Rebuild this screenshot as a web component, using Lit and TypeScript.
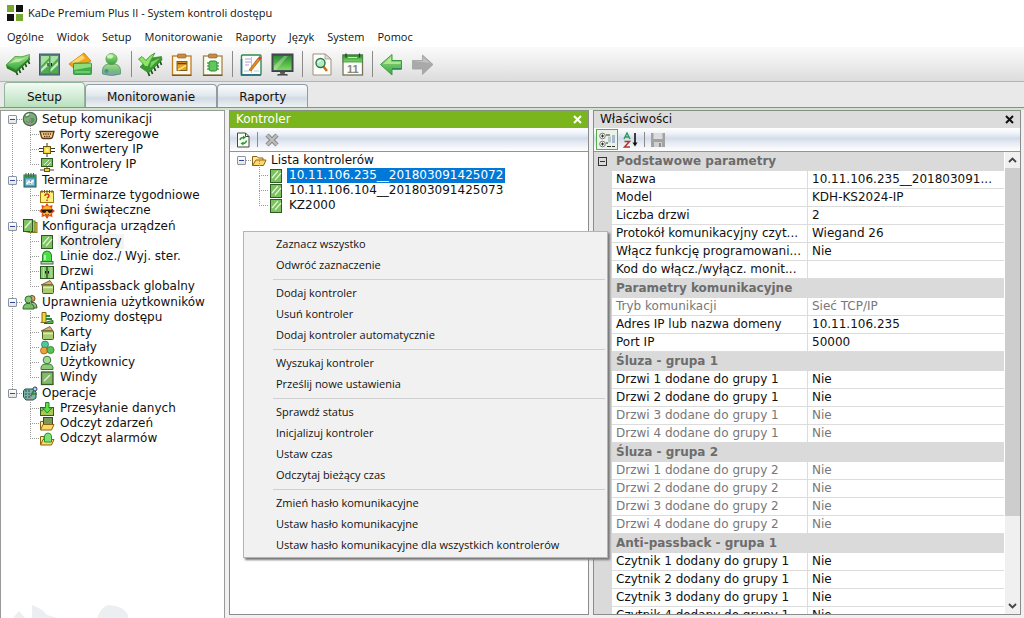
import { LitElement, html, css, svg, nothing, TemplateResult, SVGTemplateResult } from 'lit';
import { customElement, property, state } from 'lit/decorators.js';
import { classMap } from 'lit/directives/class-map.js';

/* ---------- icon artwork ---------- */

const BIG: Record<string, SVGTemplateResult> = {
  chip: svg`<path d="M11 20l1.500 4M14 18l1.500 4M17 15l1.500 4M20 12l1.500 4M23 9l1.500 4" stroke="#1d4a1d" stroke-width="1.700"/>
    <path d="M1 14L2 17.500L11 22L25 9L24.500 5z" fill="#2a7a26"/>
    <path d="M1 14L10 5.500Q17 7 24.500 3.500L23.500 8L11 19z" fill="url(#gr)" stroke="#3b9a30" stroke-width=".8"/>
    <path d="M4 13L11 7.500Q16 8.500 21 6.500L14 11Q9 10.500 4 13z" fill="#c9efb4" opacity=".8"/>`,
  doors: svg`<rect x="3.500" y="3" width="20" height="21" fill="#5d7f7c" stroke="#35606a"/>
    <rect x="5" y="5" width="8" height="17" fill="#4fae4c"/><rect x="14.500" y="5" width="7.500" height="17" fill="#4fae4c"/>
    <path d="M5 5h8v2L5 15zM14.500 5h7.500v2l-7.500 8z" fill="#a9dfa0"/>
    <path d="M5 18L13 10V14L5 21zM14.500 18L22 10.500V14L14.500 21z" fill="#d9f5d4" opacity=".85"/>
    <path d="M12 12v3M15.500 12v3" stroke="#123" stroke-width="1.200"/>`,
  cards: svg`<path d="M2 13L17 2L24 10L8 18z" fill="#f2a71b" stroke="#c27a08" stroke-width=".8"/>
    <path d="M5 11L15 4L18 7L7 14z" fill="#ffd56a"/>
    <rect x="6.500" y="12" width="18" height="11.500" rx="1" fill="#3fae48" stroke="#2c8a38" stroke-width=".8"/>
    <path d="M7 13L24 12.500V16L7 19z" fill="#8fdc7c"/><path d="M8 21h15" stroke="#9fe0a0" stroke-width="1"/>`,
  user: svg`<path d="M4.500 23Q3.500 14 10 13H17Q23.500 14 22.500 23Q14 26 4.500 23z" fill="url(#us)" stroke="#4d8a5c" stroke-width=".7"/>
    <circle cx="13.500" cy="8" r="5.600" fill="url(#gr)" stroke="#4b9a48" stroke-width=".7"/>
    <ellipse cx="12" cy="5.500" rx="3" ry="2" fill="#d8f5c8" opacity=".9"/><circle cx="8.500" cy="20" r="2" fill="#3b66b8" opacity=".6"/>`,
  chipCheck: svg`<path d="M11 21l1.500 4M14 19l1.500 4M17 16l1.500 4M20 13l1.500 4M23 10l1.500 4" stroke="#1d4a1d" stroke-width="1.700"/>
    <path d="M3 16L11 7.500L24.500 5.500L25 9L11.500 22z" fill="#3a9a30" stroke="#2a7a26" stroke-width=".6"/>
    <path d="M14 11L23 7L13 17z" fill="#7fcf6c"/>
    <path d="M1.500 8L5 5.500L9 9.500Q13 4 18 2Q14 8 11 15.500H8Q5 11 1.500 8z" fill="#8ee36a" stroke="#3aa02c" stroke-width=".9"/>`,
  clipCard: svg`<rect x="4.500" y="5" width="18.500" height="19" fill="#fff8ea" stroke="#c07a20" stroke-width="1.300"/>
    <path d="M4 24.300h19.500" stroke="#333" stroke-width=".8"/>
    <rect x="9.500" y="3" width="8.500" height="4" rx="1" fill="#c98a45" stroke="#805a2a" stroke-width=".6"/>
    <rect x="9" y="10.500" width="10" height="9" fill="#f3a112" stroke="#5a4a18" stroke-width=".8"/><path d="M9.500 12.500h9" stroke="#444" stroke-width="1.500"/>
    <path d="M10 19L18 14.500" stroke="#ffe08a" stroke-width="1.500"/>`,
  clipChip: svg`<rect x="4.500" y="5" width="18.500" height="19" fill="#f8fff4" stroke="#a98345" stroke-width="1.300"/>
    <path d="M4 24.300h19.500" stroke="#333" stroke-width=".8"/>
    <rect x="9.500" y="3" width="8.500" height="4" rx="1" fill="#c98a45" stroke="#805a2a" stroke-width=".6"/>
    <path d="M8 12h12M8 15h12M8 18h12" stroke="#2c6e32" stroke-width="1.200"/>
    <rect x="10" y="10" width="8" height="10" rx="2" fill="#5fc858" stroke="#2f8a3a"/>`,
  note: svg`<rect x="3.500" y="4" width="19.500" height="20" rx="1" fill="#fff" stroke="#2f8a4a" stroke-width="1.400"/>
    <path d="M3.500 8v16h19.500" stroke="#25688a" stroke-width="1.600"/><path d="M7 8h6M7 11h6M7 14h4" stroke="#cbbfe0" stroke-width="1.300"/>
    <path d="M13.500 6v16M16 20h5M6 20h5" stroke="#b8c8d8"/>
    <path d="M11 19L20 7L22 9L13 20z" fill="#e58b1c" stroke="#8a4a10" stroke-width=".6"/><path d="M20 7l2 2 1.500-2-2-2z" fill="#d33"/>`,
  monitor: svg`<rect x="3" y="3" width="21" height="17.500" fill="#4a5158" stroke="#3a4044"/>
    <rect x="4.500" y="5" width="18" height="14" fill="url(#gr2)"/><path d="M5 15L15 5h4L7 19H5z" fill="#fff" opacity=".3"/>
    <rect x="11" y="20.500" width="5" height="2" fill="#555"/><path d="M8.500 24Q13.500 21.500 18.500 24z" fill="#444" stroke="#444"/>`,
  search: svg`<path d="M5 3H17L23 8V24H5z" fill="#fffef8" stroke="#99917c"/><path d="M17 3V8H23z" fill="#ddd" stroke="#99917c" stroke-width=".7"/>
    <path d="M15 15L19 20" stroke="#d07018" stroke-width="2.600"/><circle cx="12.500" cy="12" r="4.500" fill="#b4ecc0" stroke="#267a52" stroke-width="1.400"/>
    <path d="M10 12q1-3 3-2.500" stroke="#fff" fill="none"/>`,
  calendar: svg`<rect x="4" y="4" width="19.500" height="20" fill="#fdfdfa" stroke="#77715c" stroke-width="1.300"/>
    <rect x="4" y="4" width="19.500" height="7" fill="url(#gr2)" stroke="#3a8a3c" stroke-width=".8"/><path d="M7 2.500v4M20.500 2.500v4" stroke="#333" stroke-width="1.300"/>
    <path d="M9 6.500h9" stroke="#b9efb0"/><text x="13.800" y="21.500" text-anchor="middle" font-family="Liberation Sans" font-weight="bold" font-size="11" fill="#8a8578">11</text>`,
  back: svg`<path d="M2.500 13.500L14 3.500V9.500H23.500V18H14V24z" fill="url(#gr)" stroke="#3a9a44" stroke-width="1"/>
    <path d="M5 13L13 6v5h9.500v2z" fill="#c6f7a4" opacity=".65"/><path d="M14 18h9.500" stroke="#1b6a6a"/>`,
  forward: svg`<path d="M24 13.500L13.500 4V9.500H3.500V18H13.500V23.500z" fill="#a9a9a9" stroke="#a0a0a0" stroke-width=".8"/><path d="M4 10h10v-4l7 6z" fill="#c2c2c2"/>`,
};

const dev = svg`<rect x="2.500" y="1.500" width="11" height="13" fill="#7cc262" stroke="#2c5a20"/><path d="M4 10L10 3M7 12L13 5" stroke="#dff5d0" stroke-width="1.200"/>`;
const cardsSmall = svg`<path d="M2 6L11 1.500L14 6z" fill="#d9b070" stroke="#6a4a20" stroke-width=".8"/><rect x="3.500" y="6" width="11" height="8.500" rx="1" fill="#a8cc70" stroke="#4a5a28"/><path d="M4 8.500h10" stroke="#ece4a8" stroke-width="1.500"/>`;
const person = svg`<path d="M2 14.500Q1.500 9.500 6 9H10Q14.500 9.500 14 14.500z" fill="#8cca78" stroke="#3a7a38"/><circle cx="8" cy="5" r="3.800" fill="#a4d894" stroke="#3a7a38"/>`;
const folder = svg`<path d="M1.500 13.500V4.500H6L7.500 6H12V8" fill="#ffe9a0" stroke="#8a6414"/><path d="M1.500 13.500L5 8H15L12.500 13.500z" fill="#ffd869" stroke="#8a6414"/>`;

const SMALL: Record<string, SVGTemplateResult> = {
  globe: svg`<circle cx="8" cy="8" r="6.700" fill="#7fae7a" stroke="#4f6a54" stroke-width="1.300"/><path d="M3 6q4 1 5-2M8 8q4-2 4 1-1 3-4 3zM4 10l3 2" fill="#5a9a58" stroke="#5a8a5c"/><path d="M4 4.500l3-1.500" stroke="#e6f5e0" stroke-width="1.500"/>`,
  port: svg`<path d="M1 4.500H15L13.500 10Q13 11.500 11.500 11.500H4.500Q3 11.500 2.500 10z" fill="#f3cf86" stroke="#5a3818" stroke-width="1.300"/><path d="M4 7h8M5 9.500h6" stroke="#5a3010" stroke-width="1.300" stroke-dasharray="1.300 1"/>`,
  converter: svg`<path d="M0 6.500h16M0 9.500h16M8 1v14" stroke="#333"/><rect x="4.500" y="4.500" width="7" height="7" fill="#f8d830" stroke="#6a5a10"/><rect x="6.500" y="6.500" width="3" height="3" fill="#fff5a0"/>`,
  ipctl: svg`<rect x="2.500" y="1.500" width="11" height="8" fill="#7cc262" stroke="#2c5a20"/><path d="M5 8l5-5M8 9l4-4" stroke="#dff5d0"/><path d="M8 10v2M1 13h14" stroke="#444"/><rect x="5.500" y="11.500" width="5" height="3" fill="#f3d32c" stroke="#665a14"/>`,
  schedule: svg`<rect x="2" y="3" width="12" height="12" fill="#4f9fc0" stroke="#1f5f48"/><path d="M2 4.500h12" stroke="#3a9a48" stroke-width="3"/><path d="M4 1v4M6.500 1v4M9 1v4M11.500 1v4" stroke="#3a6a40"/><rect x="4" y="7.500" width="8" height="5.500" fill="#a9d4ea"/><path d="M4.500 12l2.500-2.500 2 1.500 2.500-3" stroke="#fff" stroke-width="1.300" fill="none"/>`,
  week: svg`<rect x="1.500" y="3.500" width="13" height="11" fill="#fff07a" stroke="#a07810"/><path d="M3 2v3M5.500 2v3M8 2v3M10.500 2v3M13 2v3" stroke="#6a5010"/><path d="M6 8q0-2 2-2t2 2q0 1-2 2M8 11.500v1.500" stroke="#d4381c" stroke-width="1.500" fill="none"/>`,
  sun: svg`<path d="M8 0l2 3 3.500-1L13 5.500 16 8l-3 2.500.5 3.500L10 13l-2 3-2-3-3.500 1L3 10.500 0 8l3-2.500L2.500 2 6 3z" fill="#e84a1c"/><circle cx="8" cy="8" r="5" fill="#ffb22c"/><path d="M2.500 6.500H13.500V8q-.5 2-2.500 2T8.500 8h-1Q7 10 5 10T2.500 8z" fill="#2a1a10"/><path d="M6 11.500q2 1.500 4 0" stroke="#7a3010" fill="none"/>`,
  devices: svg`<rect x="7" y="4.500" width="8" height="10" fill="#e0c452" stroke="#8a7a28"/><rect x="5" y="3" width="8" height="11" fill="#b8cc58" stroke="#6a7a28"/><rect x="1.500" y="1.500" width="9" height="12" fill="#7cc262" stroke="#2c5a20"/><path d="M3 10l6-7" stroke="#dff5d0" stroke-width="1.500"/>`,
  device: dev,
  alarm: svg`<path d="M3.500 13V6Q4 2 8 2T12.500 6V13z" fill="#4fdc4a" stroke="#2a8a2a"/><rect x="2" y="12.500" width="12" height="2.500" fill="#b8d0b0" stroke="#446a44"/><path d="M6 11V6" stroke="#d0ffc8" stroke-width="1.500"/>`,
  door: svg`<rect x="1.500" y="2.500" width="13" height="12" fill="#8ac872" stroke="#2c5a20"/><path d="M8 2v12.500" stroke="#2c4a20" stroke-width="1.400"/><path d="M4.500 3v11M12 3v11" stroke="#b9e0a4"/><path d="M6.500 7v2.500M9.500 7v2.500" stroke="#111"/>`,
  cards: cardsSmall,
  users: svg`<circle cx="10" cy="4.500" r="3" fill="#d8a870" stroke="#6a4a2a"/><path d="M8 14V8.500h4q3 1 3 5.500z" fill="#9ab888" stroke="#4a5a3a"/><circle cx="6.500" cy="5.500" r="3.500" fill="#86c876" stroke="#2f6a30"/><path d="M1 15Q1 10 5 9.500H8Q12 10 12 15z" fill="#7cc06c" stroke="#2f6a30"/>`,
  levels: svg`<path d="M3 2.500h4v10H3zM1.500 12.500h12" fill="#f3d23a" stroke="#8a6a10"/><path d="M7 6h4M7 9h6" stroke="#2a8a3a" stroke-width="2"/><path d="M5 13.500h9v-3l-5 1z" fill="#5ab85a" stroke="#2a6a2a"/>`,
  groups: svg`<circle cx="6" cy="4.500" r="3.500" fill="#4fc8a0" stroke="#1f7a5a" stroke-width=".8"/><circle cx="5" cy="10.500" r="3.500" fill="#f0a038" stroke="#a05a10" stroke-width=".8"/><circle cx="11.500" cy="10" r="3.600" fill="#5ac05a" stroke="#2a7a2a" stroke-width=".8"/>`,
  person,
  lift: svg`<rect x="2.500" y="2" width="11.500" height="12.500" fill="#84b86a" stroke="#3a5a28" stroke-width="1.300"/><path d="M5 11l6-6" stroke="#e0f3d0" stroke-width="1.300"/>`,
  ops: svg`<path d="M3 4h8l3 3v6l-3 2H4l-2.500-3V6z" fill="#78b8a0" stroke="#2a4a58"/><path d="M4 5v9M7 5v9" stroke="#24485a" stroke-dasharray="2 1"/><path d="M8 12l6-10M9 9h6" stroke="#3a7a4a" stroke-width="1.600"/><circle cx="13" cy="4" r="2" fill="#b0d8ff" stroke="#345"/>`,
  send: svg`<rect x="1.500" y="6.500" width="13" height="8" fill="#a8c858" stroke="#3a5a20"/><path d="M2 10l3-2 3 3 4-3" stroke="#4a6a2a" fill="none"/><path d="M6.500 1.500h3.500V7h3L8.200 12 3.500 7h3z" fill="#5fe048" stroke="#268a20"/>`,
  events: svg`<path d="M1.500 13.500V5.500H5V8" fill="#ffe9a0" stroke="#8a6414"/><rect x="4.500" y="1.500" width="9" height="8" fill="#7a9a58" stroke="#3a4a28"/><path d="M1.500 14L4 8.500H15L12.500 14z" fill="#ffd869" stroke="#8a6414"/>`,
  alarms: svg`<path d="M1.500 13.500V5.500H5V8" fill="#ffe9a0" stroke="#8a6414"/><path d="M1.500 14L4 8.500H15L12.500 14z" fill="#ffd869" stroke="#8a6414"/><path d="M5.500 11V5Q6 2 9 2t3.500 3V11z" fill="#7ae07a" stroke="#2a9a2a"/>`,
  folder,
  refresh: svg`<path d="M2.500 1H10.500L14 4.500V15H2.500z" fill="#fcfff8" stroke="#3f4a3a"/><path d="M10.500 1V4.500H14" fill="none" stroke="#3f4a3a"/><path d="M5 8q.5-2.500 3.500-2.500M11.500 8.500q-.5 3-3.500 3" stroke="#2a9a30" stroke-width="1.500" fill="none"/><path d="M8 3.500L11 5.500 8 7.500zM8.500 9.500L5.500 11.500 8.500 13.500z" fill="#2a9a30"/>`,
  remove: svg`<path d="M3 3L13 13M13 3L3 13" stroke="#888" stroke-width="4.400"/><path d="M3 3L13 13M13 3L3 13" stroke="#bdbdbd" stroke-width="2.400"/>`,
  categorized: svg`<circle cx="3.500" cy="4" r="2.800" fill="#fff" stroke="#777"/><circle cx="3.500" cy="12" r="2.800" fill="#fff" stroke="#777"/><path d="M2 4h3M3.500 2.500v3M2 12h3M3.500 10.500v3" stroke="#222"/><path d="M7 3h4M8 14.500h4M13 14.500h3M7 11h2" stroke="#333"/><rect x="9" y="4.500" width="3" height="6" fill="#b9c9c4"/><rect x="13" y="3" width="3" height="8" fill="#a9b9d0"/>`,
  sort: svg`<path d="M1 7L4 1 7 7M2 5h4" stroke="#2b9a5a" stroke-width="1.400" fill="none"/><path d="M1.500 9.500h5L1.500 15H7" stroke="#b03a2a" stroke-width="1.500" fill="none"/><path d="M12 1v12" stroke="#111" stroke-width="1.600"/><path d="M9.500 10.500h5L12 14.500z" fill="#111"/>`,
  save: svg`<path d="M1 1H15V15H1z" fill="#a2a2a2"/><rect x="3.500" y="1" width="9" height="6" fill="#dcdcdc"/><rect x="4" y="10" width="8" height="5" fill="#d0d0d0"/><rect x="9" y="11" width="2" height="4" fill="#8f8f8f"/>`,
};

const defs = svg`<defs>
  <linearGradient id="gr" x1="0" y1="0" x2="0" y2="1"><stop offset="0" stop-color="#a6e286"/><stop offset="1" stop-color="#36a444"/></linearGradient>
  <linearGradient id="gr2" x1="0" y1="0" x2="0" y2="1"><stop offset="0" stop-color="#2f8a36"/><stop offset="1" stop-color="#7cdc5c"/></linearGradient>
  <linearGradient id="us" x1="0" y1="0" x2="0" y2="1"><stop offset="0" stop-color="#a9dc8e"/><stop offset=".6" stop-color="#73bd78"/><stop offset="1" stop-color="#7c9fc0"/></linearGradient>
</defs>`;

const bigIcon = (name: string): TemplateResult =>
  html`<svg width="27" height="27" viewBox="0 0 27 27" fill="none" aria-hidden="true">${defs}${BIG[name]}</svg>`;
const icon = (name: string): TemplateResult =>
  html`<svg class="icon" width="16" height="16" viewBox="0 0 16 16" fill="none" aria-hidden="true">${SMALL[name]}</svg>`;
const cross = html`<svg width="9" height="9" viewBox="0 0 9 9" aria-hidden="true"><path d="M1 1L8 8M8 1L1 8" stroke="currentColor" stroke-width="2"/></svg>`;

/* ---------- data ---------- */

const MENUS = ['Ogólne', 'Widok', 'Setup', 'Monitorowanie', 'Raporty', 'Język', 'System', 'Pomoc'];

const TOOLS: [string, string][][] = [
  [['chip', 'Kontrolery'], ['doors', 'Drzwi'], ['cards', 'Karty'], ['user', 'Użytkownicy']],
  [['chipCheck', 'Status'], ['clipCard', 'Karty'], ['clipChip', 'Urządzenia']],
  [['note', 'Notatki'], ['monitor', 'Monitor']],
  [['search', 'Szukaj'], ['calendar', 'Kalendarz']],
  [['back', 'Wstecz'], ['forward', 'Dalej']],
];

interface Node { icon: string; label: string; children?: Node[]; mark?: boolean; selected?: boolean }

const SETUP_TREE: Node[] = [
  { icon: 'globe', label: 'Setup komunikacji', children: [
    { icon: 'port', label: 'Porty szeregowe' }, { icon: 'converter', label: 'Konwertery IP' }, { icon: 'ipctl', label: 'Kontrolery IP' }] },
  { icon: 'schedule', label: 'Terminarze', children: [
    { icon: 'week', label: 'Terminarze tygodniowe' }, { icon: 'sun', label: 'Dni świąteczne' }] },
  { icon: 'devices', label: 'Konfiguracja urządzeń', children: [
    { icon: 'device', label: 'Kontrolery', mark: true }, { icon: 'alarm', label: 'Linie doz./ Wyj. ster.' },
    { icon: 'door', label: 'Drzwi' }, { icon: 'cards', label: 'Antipassback globalny' }] },
  { icon: 'users', label: 'Uprawnienia użytkowników', children: [
    { icon: 'levels', label: 'Poziomy dostępu' }, { icon: 'cards', label: 'Karty' }, { icon: 'groups', label: 'Działy' },
    { icon: 'person', label: 'Użytkownicy' }, { icon: 'lift', label: 'Windy' }] },
  { icon: 'ops', label: 'Operacje', children: [
    { icon: 'send', label: 'Przesyłanie danych' }, { icon: 'events', label: 'Odczyt zdarzeń' }, { icon: 'alarms', label: 'Odczyt alarmów' }] },
];

const CONTROLLER_TREE: Node[] = [
  { icon: 'folder', label: 'Lista kontrolerów', children: [
    { icon: 'device', label: '10.11.106.235__201803091425072', selected: true },
    { icon: 'device', label: '10.11.106.104__201803091425073' },
    { icon: 'device', label: 'KZ2000' }] },
];

const CONTEXT: string[][] = [
  ['Zaznacz wszystko', 'Odwróć zaznaczenie'],
  ['Dodaj kontroler', 'Usuń kontroler', 'Dodaj kontroler automatycznie'],
  ['Wyszukaj kontroler', 'Prześlij nowe ustawienia'],
  ['Sprawdź status', 'Inicjalizuj kontroler', 'Ustaw czas', 'Odczytaj bieżący czas'],
  ['Zmień hasło komunikacyjne', 'Ustaw hasło komunikacyjne', 'Ustaw hasło komunikacyjne dla wszystkich kontrolerów'],
];

type Row = [label: string, value: string, readonly?: boolean];
const PROPS: { title: string; rows: Row[] }[] = [
  { title: 'Podstawowe parametry', rows: [
    ['Nazwa', '10.11.106.235__201803091...'], ['Model', 'KDH-KS2024-IP'], ['Liczba drzwi', '2'],
    ['Protokół komunikacyjny czyt...', 'Wiegand 26'], ['Włącz funkcję programowani...', 'Nie'], ['Kod do włącz./wyłącz. monit...', '']] },
  { title: 'Parametry komunikacyjne', rows: [
    ['Tryb komunikacji', 'Sieć TCP/IP', true], ['Adres IP lub nazwa domeny', '10.11.106.235'], ['Port IP', '50000']] },
  { title: 'Śluza - grupa 1', rows: [
    ['Drzwi 1 dodane do grupy 1', 'Nie'], ['Drzwi 2 dodane do grupy 1', 'Nie'],
    ['Drzwi 3 dodane do grupy 1', 'Nie', true], ['Drzwi 4 dodane do grupy 1', 'Nie', true]] },
  { title: 'Śluza - grupa 2', rows: [1, 2, 3, 4].map((n): Row => [`Drzwi ${n} dodane do grupy 2`, 'Nie', true]) },
  { title: 'Anti-passback - grupa 1', rows: [1, 2, 3, 4].map((n): Row => [`Czytnik ${n} dodany do grupy 1`, 'Nie']) },
];

const base = css`
  *, *::before, *::after { box-sizing: border-box; }
  button { font: inherit; color: inherit; background: none; border: 0; padding: 0; margin: 0; text-align: left; cursor: default; white-space: nowrap; }
  ul { list-style: none; margin: 0; padding: 0; }
  svg { display: block; flex: none; }
`;

/* ---------- tree ---------- */

@customElement('dotted-tree')
export class DottedTree extends LitElement {
  @property({ attribute: false }) nodes: Node[] = [];
  @state() private closed = new Set<string>();

  static styles = [base, css`
    :host { display: block; font: 12px/15px "DejaVu Sans", Verdana, sans-serif; color: #111; }
    .group { position: relative; }
    .group:not(:last-child)::before { content: ""; position: absolute; left: 4px; top: 8px; bottom: -8px; border-left: 1px dotted #999; }
    .head { display: flex; align-items: center; height: 16px; }
    .toggle { position: relative; width: 9px; height: 9px; border: 1px solid #8a93a3; border-radius: 1px; background: linear-gradient(#fff, #e4e4e4); }
    .toggle::before { content: ""; position: absolute; left: 1px; right: 1px; top: 3px; border-top: 1px solid #34489a; }
    .toggle.plus::after { content: ""; position: absolute; top: 1px; bottom: 1px; left: 3px; border-left: 1px solid #34489a; }
    .stub { width: 5px; border-top: 1px dotted #999; }
    .label { margin-left: 2px; padding: 0 2px; }
    .child { position: relative; display: flex; align-items: center; height: 15px; padding-left: 22px; }
    .child::before { content: ""; position: absolute; left: 22px; top: -8px; height: 16px; border-left: 1px dotted #999; }
    .child .stub { width: 9px; }
    .child .label { margin-left: 3px; }
    .mark { background: #f3f3f1; }
    .selected { background: #0078d7; color: #fff; }
  `];

  private toggle(label: string) {
    const next = new Set(this.closed);
    next.has(label) ? next.delete(label) : next.add(label);
    this.closed = next;
  }

  render() {
    return html`<ul>${this.nodes.map(n => html`
      <li class="group">
        <div class="head">
          <button class=${classMap({ toggle: true, plus: this.closed.has(n.label) })} aria-label=${`Zwiń: ${n.label}`} @click=${() => this.toggle(n.label)}></button>
          <span class="stub"></span>${icon(n.icon)}
          <button class="label">${n.label}</button>
        </div>
        ${this.closed.has(n.label) ? nothing : html`<ul>${n.children?.map(c => html`
          <li class="child"><span class="stub"></span>${icon(c.icon)}
            <button class=${classMap({ label: true, mark: !!c.mark, selected: !!c.selected })}>${c.label}</button></li>`)}</ul>`}
      </li>`)}</ul>`;
  }
}

/* ---------- property grid ---------- */

@customElement('property-grid')
export class PropertyGrid extends LitElement {
  static styles = [base, css`
    :host { display: flex; min-height: 0; overflow: hidden; font: 12px/15px "DejaVu Sans", Verdana, sans-serif; color: #111; }
    .view { flex: 1; min-width: 0; overflow: hidden; background: #fff; }
    table { width: 100%; border-collapse: separate; border-spacing: 0; table-layout: fixed; }
    .gutter { width: 18px; }
    th, td { padding: 0 4px; height: 18px; text-align: left; font-weight: normal; white-space: nowrap; overflow: hidden; border-bottom: 1px solid #dcdcdc; }
    .edge { background: #dadada; border-color: #dadada; }
    .name { border-right: 1px solid #dcdcdc; }
    .category th { height: 19px; background: #dadada; border-color: #dadada; font-weight: bold; color: #6c6c6c; }
    .readonly { color: #777; }
    .fold { display: block; width: 9px; height: 9px; border: 1px solid #333; position: relative; }
    .fold::after { content: ""; position: absolute; left: 1px; right: 1px; top: 3px; border-top: 1px solid #333; }
    .bar { width: 16px; display: flex; flex-direction: column; background: #f0f0f0; border-left: 1px solid #fff; }
    .step { height: 16px; display: grid; place-items: center; color: #444; }
    .rail { flex: 1; }
    .thumb { height: 81%; background: #cdcdcd; }
  `];

  render() {
    return html`
      <div class="view"><table>
        <colgroup><col class="gutter"><col><col></colgroup>
        <tbody>${PROPS.map((g, i) => html`
          <tr class="category">
            <th class="edge">${i === 0 ? html`<button class="fold" aria-label="Zwiń"></button>` : nothing}</th>
            <th colspan="2" scope="rowgroup">${g.title}</th>
          </tr>
          ${g.rows.map(([label, value, ro]) => html`
            <tr class=${classMap({ readonly: !!ro })}><td class="edge"></td><th class="name" scope="row">${label}</th><td>${value}</td></tr>`)}`)}
        </tbody>
      </table></div>
      <div class="bar">
        <button class="step" aria-label="W górę"><svg width="9" height="6" viewBox="0 0 9 6" fill="none"><path d="M1 5L4.500 1.500L8 5" stroke="currentColor" stroke-width="1.800"/></svg></button>
        <div class="rail"><div class="thumb"></div></div>
        <button class="step" aria-label="W dół"><svg width="9" height="6" viewBox="0 0 9 6" fill="none"><path d="M1 1L4.500 4.500L8 1" stroke="currentColor" stroke-width="1.800"/></svg></button>
      </div>`;
  }
}

/* ---------- window ---------- */

@customElement('app-root')
export class AppRoot extends LitElement {
  @state() private tab = 'Setup';

  static styles = [base, css`
    :host { display: flex; flex-direction: column; height: 100vh; overflow: hidden; background: #f0f0f0; color: #111;
      font: 12px/15px "DejaVu Sans", Verdana, sans-serif; }
    .title { display: flex; align-items: center; gap: 5px; height: 26px; padding: 0 7px; background: #fff; font: 11px/16px "Open Sans", "Segoe UI", sans-serif; }
    .menubar { display: flex; gap: 13px; height: 21px; padding: 0 7px; background: #fff; font: 11px/20px "Open Sans", "Segoe UI", sans-serif; }
    .tools { display: flex; align-items: center; height: 35px; padding: 0 3px; background: linear-gradient(#fafafa, #eee 45%, #dcdcdc); border-bottom: 1px solid #b4b4b4; }
    .set { display: flex; }
    .set + .set::before { content: ""; width: 1px; height: 26px; margin: 0 3px 0 4px; background: #8a8a8a; }
    .tool { width: 31px; height: 27px; display: grid; place-items: center; }
    .tabs { display: flex; align-items: flex-end; height: 25px; padding: 0 4px; background: #e9e9e9; }
    .tab { height: 23px; padding: 2px 21px 0; text-align: center; border: 1px solid #8f9ba5; border-bottom: 0; border-radius: 4px 4px 0 0;
      background: linear-gradient(#fafbfc, #e4e9ee 45%, #d2dae2 60%, #eef2f5); }
    .tab.on { height: 25px; padding: 4px 22px 0; border-color: #93b59a; background: linear-gradient(#f2faf3, #d5edd9 50%, #b9e0bf); }
    .rule { height: 3px; background: #cfe6c8; border-top: 1px solid #7b9a7e; }
    .work { flex: 1; min-height: 0; display: grid; grid-template-columns: 225px minmax(0, 360fr) minmax(0, 428fr); gap: 4px; padding-right: 3px; }
    .nav { display: flex; flex-direction: column; justify-content: space-between; background: #fff; border: 1px solid #999; border-bottom: 0; }
    .nav dotted-tree { padding: 0 7px; }
    .watermark { align-self: flex-start; margin-left: 12px; }
    .pane { position: relative; display: flex; flex-direction: column; min-height: 0; margin-bottom: 3px; background: #fff; border: 1px solid #8c8c8c; }
    .bar { display: flex; align-items: center; justify-content: space-between; height: 17px; padding: 0 6px; background: #dcdcdc; }
    .bar h2 { margin: 0; font: inherit; }
    .bar.green { background: #7ab51d; color: #fff; }
    .strip { display: flex; align-items: center; gap: 6px; height: 24px; padding: 0 5px; border-bottom: 1px solid #8f949a;
      background: linear-gradient(#fff, #edf1f7 25%, #d3dcea 45%, #e6ebf3 65%, #fff); }
    .strip .sep { width: 1px; height: 15px; background: #8a8a8a; }
    .strip.props { gap: 5px; padding: 0 2px; }
    .pressed { width: 22px; height: 21px; display: grid; place-items: center; border: 1px solid #55b04a; background: #eaf3ea; }
    .pane dotted-tree { padding: 0 7px; }
    property-grid { flex: 1; }
    .context { position: absolute; left: 13px; top: 120px; z-index: 2; min-width: 365px; padding: 1px 2px 2px; background: #f1f1f1;
      border: 1px solid #b4b4b4; box-shadow: 2px 2px 2px #777; font: 11px/21px "Open Sans", "Segoe UI", sans-serif; }
    .section + .section { position: relative; padding-top: 7px; }
    .section + .section::before { content: ""; position: absolute; left: 27px; right: 0; top: 4px; border-top: 1px solid #d0d0d0; }
    .item { display: block; width: 100%; padding: 0 30px; height: 21px; }
  `];

  render() {
    return html`
      <header class="title">
        <svg width="16" height="16" viewBox="0 0 16 16" aria-hidden="true"><path d="M0 0h7v7H0zM9 9h7v7H9z" fill="#76a830"/><path d="M9 0h7v7H9zM0 9h7v7H0z" fill="#111"/></svg>
        <span>KaDe Premium Plus II - System kontroli dostępu</span>
      </header>
      <nav class="menubar">${MENUS.map(m => html`<button>${m}</button>`)}</nav>
      <div class="tools">${TOOLS.map(g => html`<div class="set">${g.map(([n, l]) => html`<button class="tool" aria-label=${l}>${bigIcon(n)}</button>`)}</div>`)}</div>
      <div class="tabs">${['Setup', 'Monitorowanie', 'Raporty'].map(t => html`
        <button class=${classMap({ tab: true, on: this.tab === t })} @click=${() => (this.tab = t)}>${t}</button>`)}</div>
      <div class="rule"></div>
      <main class="work">
        <aside class="nav">
          <dotted-tree .nodes=${SETUP_TREE}></dotted-tree>
          <svg class="watermark" width="120" height="14" viewBox="0 0 120 14" aria-hidden="true">
            <path d="M0 14L6 7L12 14zM19 1Q30 5 34 11L44 14H19zM84 14Q88 3 95 1Q110 1 115 11V14z" fill="#eceff2"/>
          </svg>
        </aside>
        <section class="pane">
          <div class="bar green"><h2>Kontroler</h2><button aria-label="Zamknij">${cross}</button></div>
          <div class="strip"><button aria-label="Odśwież">${icon('refresh')}</button><span class="sep"></span><button aria-label="Usuń">${icon('remove')}</button></div>
          <dotted-tree .nodes=${CONTROLLER_TREE}></dotted-tree>
          <div class="context">${CONTEXT.map(s => html`<div class="section">${s.map(i => html`<button class="item">${i}</button>`)}</div>`)}</div>
        </section>
        <section class="pane">
          <div class="bar"><h2>Właściwości</h2><button aria-label="Zamknij">${cross}</button></div>
          <div class="strip props"><button class="pressed" aria-label="Kategorie">${icon('categorized')}</button><button aria-label="Sortuj">${icon('sort')}</button><span class="sep"></span><button aria-label="Zapisz">${icon('save')}</button></div>
          <property-grid></property-grid>
        </section>
      </main>`;
  }
}
